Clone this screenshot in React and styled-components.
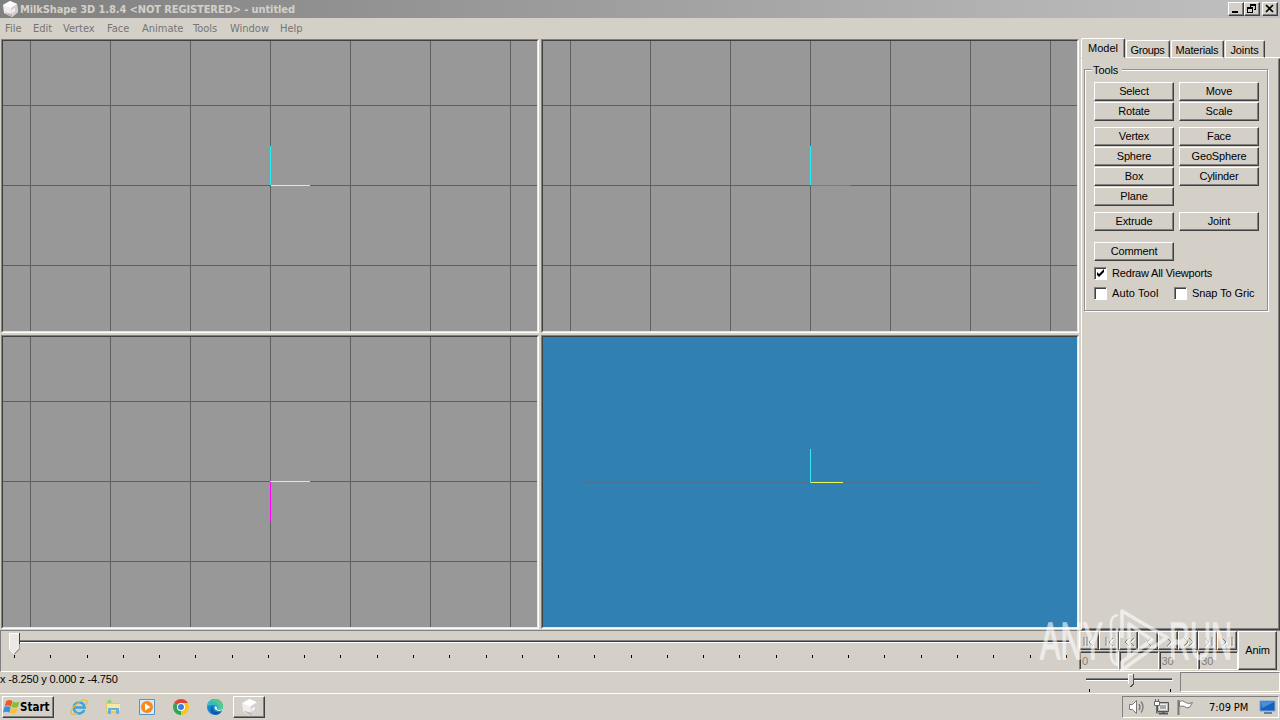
import React, { useState } from "react";
import styled, { createGlobalStyle, css } from "styled-components";

const GlobalStyle = createGlobalStyle`
  * {
    box-sizing: border-box;
  }
  body {
    margin: 0;
    overflow: hidden;
    background: #d4d0c8;
    color: #000;
    font: 11px/13px "Liberation Sans", Arial, sans-serif;
  }
`;

const MENU = [
  ["File", 28],
  ["Edit", 30],
  ["Vertex", 44],
  ["Face", 35],
  ["Animate", 51],
  ["Tools", 37],
  ["Window", 50],
  ["Help", 30],
];

const TABS = [
  ["Groups", 44, -0.35],
  ["Materials", 53, -0.2],
  ["Joints", 40, -0.1],
];

// rows of the tool box, with the gap above each row
const TOOLS = [
  { names: ["Select", "Move"], gap: 0 },
  { names: ["Rotate", "Scale"], gap: 1 },
  { names: ["Vertex", "Face"], gap: 6 },
  { names: ["Sphere", "GeoSphere"], gap: 1 },
  { names: ["Box", "Cylinder"], gap: 1 },
  { names: ["Plane"], gap: 1 },
  { names: ["Extrude", "Joint"], gap: 6 },
  { names: ["Comment"], gap: 11 },
];

const TRANSPORT = ["M4 4v9M7 4v9M13 5l-4 4 4 4", "M6 4v9M13 5l-4 4 4 4", "M9 5L5 9l4 4M14 5l-4 4 4 4", "M12 5L8 9l4 4", "M8 5l4 4-4 4", "M5 5l4 4-4 4M10 5l4 4-4 4", "M6 5l4 4-4 4M13 4v9", "M4 5l4 4-4 4M11 4v9M14 4v9"];

function App() {
  const [redraw, setRedraw] = useState(true);
  const [autoTool, setAutoTool] = useState(false);
  const [snap, setSnap] = useState(false);

  return (
    <Screen>
      <GlobalStyle />
      <TitleBar>
        <CubeIcon size={18} />
        <TitleText>MilkShape 3D 1.8.4 &lt;NOT REGISTERED&gt; - untitled</TitleText>
        <CaptionButton>
          <svg width="12" height="10">
            <path d="M2 8h6" stroke="#000" strokeWidth="2" />
          </svg>
        </CaptionButton>
        <CaptionButton>
          <svg width="12" height="10" fill="none" stroke="#000" shapeRendering="crispEdges">
            <path d="M4.5 3V.5h5v5H8M4 1.5h6M1.5 3.5h5v5h-5zM1 4.5h6" />
          </svg>
        </CaptionButton>
        <CaptionButton $gap={2}>
          <svg width="12" height="10" stroke="#000">
            <path d="M2 1l7 7M9 1L2 8" strokeWidth="1.7" />
          </svg>
        </CaptionButton>
      </TitleBar>
      <MenuBar>
        {MENU.map(([name, width]) => (
          <MenuItem key={name} $width={width}>
            {name}
          </MenuItem>
        ))}
      </MenuBar>
      <Workspace>
        <Views>
          <Viewport vertical="M267 105h1v39h-1z" horizontal="M268 144h39v1h-39z" colors={["#22f0f4", "#ffff00"]} />
          <Viewport vertical="M267 105h1v39h-1z" horizontal="M268 144h39v1h-39z" colors={["#22f0f4", "#ff20ff"]} />
          <Viewport vertical="M267 145h1v40h-1z" horizontal="M267 144h40v1h-40z" colors={["#ff00ff", "#ffff00"]} />
          <Perspective />
        </Views>
        <SidePanel>
          <TabRow>
            <ActiveTab>Model</ActiveTab>
            {TABS.map(([name, width, spacing]) => (
              <Tab key={name} $width={width} $spacing={spacing}>
                {name}
              </Tab>
            ))}
            <TabFill />
          </TabRow>
          <TabPage>
            <ToolGroup>
              <GroupTitle>Tools</GroupTitle>
              {TOOLS.map(({ names, gap }) => (
                <ToolRow key={names[0]} $gap={gap}>
                  {names.map((name) => (
                    <ToolButton key={name}>{name}</ToolButton>
                  ))}
                </ToolRow>
              ))}
              <CheckRow>
                <Check label="Redraw All Viewports" checked={redraw} onChange={setRedraw} spacing={-0.18} />
              </CheckRow>
              <CheckRow>
                <Check label="Auto Tool" checked={autoTool} onChange={setAutoTool} width={80} spacing={0.1} />
                <Check label="Snap To Gric" checked={snap} onChange={setSnap} spacing={-0.08} />
              </CheckRow>
            </ToolGroup>
          </TabPage>
        </SidePanel>
      </Workspace>
      <Timeline>
        <KeySlider />
        <Controls>
          <Transport>
            {TRANSPORT.map((d) => (
              <TransportButton key={d}>
                <svg width="17" height="16" fill="none">
                  <path d={d} stroke="#fff" transform="translate(1 1)" />
                  <path d={d} stroke="#808080" />
                </svg>
              </TransportButton>
            ))}
          </Transport>
          <Frames>
            <FrameField>0</FrameField>
            <FrameField />
            <FrameField>30</FrameField>
            <FrameField>30</FrameField>
          </Frames>
        </Controls>
        <AnimButton>Anim</AnimButton>
      </Timeline>
      <StatusBar>
        <Coords>x -8.250 y 0.000 z -4.750</Coords>
        <SpeedSlider />
        <StatusBox />
      </StatusBar>
      <Taskbar>
        <StartButton>
          <WindowsLogo />
          Start
        </StartButton>
        <QuickLaunch>
          <ExplorerIcon />
          <FolderIcon />
          <PlayerIcon />
          <ChromeIcon />
          <EdgeIcon />
        </QuickLaunch>
        <TaskButton>
          <CubeIcon size={19} />
        </TaskButton>
        <Tray>
          <TrayIcons />
          <Clock>7:09 PM</Clock>
          <DesktopIcon />
        </Tray>
      </Taskbar>
      <Watermark viewBox="0 0 196 70">
        <g fill="#fff" stroke="#fff" strokeWidth="1.4" fontFamily="Liberation Sans, Arial, sans-serif" fontSize="51">
          <text x="2" y="55" textLength="63" lengthAdjust="spacingAndGlyphs">ANY</text>
          <text x="131" y="55" textLength="63" lengthAdjust="spacingAndGlyphs">RUN</text>
        </g>
        <g fill="none" stroke="#fff" strokeWidth="3.6" strokeLinejoin="round">
          <path d="M84 34V7l45 26.500L84 66v-8l30-22L91 20v32" />
          <path d="M80 11q-7 1-7 8v32q0 7 6 10V24" strokeWidth="2.600" />
        </g>
      </Watermark>
    </Screen>
  );
}

function Viewport({ vertical, horizontal, colors }) {
  return (
    <ViewFrame>
      <svg width="534" height="290" shapeRendering="crispEdges">
        <path d="M27.5 0v290M107.5 0v290M187.5 0v290M267.5 0v290M347.5 0v290M427.5 0v290M507.5 0v290M0 64.5h534M0 144.5h534M0 224.5h534" stroke="#606060" />
        <path d={vertical} fill={colors[0]} />
        <path d={horizontal} fill={colors[1]} />
      </svg>
    </ViewFrame>
  );
}

function Perspective() {
  return (
    <ViewFrame $blue>
      <svg width="534" height="290" shapeRendering="crispEdges">
        <path d="M39 145.5h457" stroke="#4a7390" />
        <path d="M267.5 112v34" stroke="#3ee4f4" />
        <path d="M268 145.5h32" stroke="#f0f850" />
      </svg>
    </ViewFrame>
  );
}

function Check({ label, checked, onChange, width, spacing }) {
  return (
    <CheckLabel $width={width} $spacing={spacing} onClick={() => onChange(!checked)}>
      <CheckBox>
        {checked && (
          <svg width="9" height="9">
            <path d="M1 3v3l2 2 5-5V0L3 5z" fill="#000" />
          </svg>
        )}
      </CheckBox>
      {label}
    </CheckLabel>
  );
}

function KeySlider() {
  const ticks = Array.from({ length: 30 }, (_, i) => Math.round(13 + i * 36.27));
  return (
    <SliderArea>
      <svg width="1078" height="39" shapeRendering="crispEdges">
        <path d="M8 9.5h1060" stroke="#808080" />
        <path d="M8 10.5h1060" stroke="#404040" />
        <path d="M8 11.5h1061" stroke="#fff" />
        {ticks.map((x) => (
          <path key={x} d={`M${x}.5 24v3`} stroke="#000" />
        ))}
        <path d="M8 2h10v16l-5 5-5-5z" fill="#ebe9e5" />
        <path d="M8.500 18V2.500h9M8 18l5 5" stroke="#fff" fill="none" />
        <path d="M18.500 2v11" stroke="#404040" fill="none" />
        <path d="M18.500 13v5l-5 5" stroke="#a0a0a0" fill="none" />
      </svg>
    </SliderArea>
  );
}

function SpeedSlider() {
  return (
    <svg width="100" height="21" shapeRendering="crispEdges">
      <path d="M6 6.500h86" stroke="#808080" />
      <path d="M6 7.500h86" stroke="#404040" />
      <path d="M6 8.500h87" stroke="#fff" />
      <path d="M9.500 17v3M90.500 17v3" stroke="#000" />
      <path d="M48 2h5v10l-2 3-3-3z" fill="#d4d0c8" />
      <path d="M48.500 12V2.500h4" stroke="#fff" fill="none" />
      <path d="M53.500 2v10l-3 3" stroke="#505050" fill="none" />
    </svg>
  );
}

function CubeIcon({ size }) {
  return (
    <svg width={size} height={size} viewBox="0 0 18 18">
      <path d="M2 5l7-4 7 3 1 8-6 5-8-4z" fill="#f1eded" />
      <path d="M2 5l7-4 7 3-6 4z" fill="#fff" />
      <path d="M10 8l6-4 1 8-6 5z" fill="#d6cece" />
      <path d="M11 10l3-2v3l-3 2z" fill="#f6f2f2" />
      <path d="M3 12l8 5v-3z" fill="#c8b3b5" />
    </svg>
  );
}

function WindowsLogo() {
  return (
    <svg width="17" height="16" viewBox="0 0 16 15">
      <path d="M3 2q3-2 6 0L7.500 7q-3-2-6 0z" fill="#ef5a24" />
      <path d="M9.500 2.300q3 2 6 0L14 7.300q-3 2-6 0z" fill="#86bf32" />
      <path d="M1.200 7.800q3-2 6 0L6 13q-3-2-6 0z" fill="#3b8de0" />
      <path d="M7.800 8.200q3 2 6 0L12.500 13q-3 2-6 0z" fill="#fcc22d" />
    </svg>
  );
}

function ExplorerIcon() {
  return (
    <svg width="18" height="18" viewBox="0 0 18 18" fill="none">
      <path d="M14.300 12A5.500 5.500 0 1 1 14.700 9.500H5" stroke="#3ba4dc" strokeWidth="2.400" />
      <path d="M1.500 16C-1 12 9 2 15 2c3 0 2 3 1 5M1.500 16c1 1 4 0 6-1" stroke="#e6b93e" strokeWidth="1.200" />
    </svg>
  );
}

function FolderIcon() {
  return (
    <svg width="18" height="18" viewBox="0 0 18 18">
      <path d="M2 3h6l1 2h7v10H2z" fill="#e9c764" />
      <path d="M3 6h13v7H3z" fill="#f8e8a6" />
      <path d="M4 2h3v3H4z" fill="#8fc98a" />
      <path d="M4 10h11v6h-3v-4H7v4H4z" fill="#64b2dc" />
    </svg>
  );
}

function PlayerIcon() {
  return (
    <svg width="18" height="18" viewBox="0 0 18 18">
      <path d="M1.500 1.500h15v15h-15z" fill="#d9eaf7" stroke="#5793c5" />
      <circle cx="9" cy="9" r="6" fill="#f58b1f" />
      <path d="M7 5.500v7L12.500 9z" fill="#fff" />
    </svg>
  );
}

function ChromeIcon() {
  return (
    <svg width="18" height="18" viewBox="0 0 18 18">
      <path d="M9 9L2.100 5A8 8 0 0 1 15.900 5z" fill="#df4436" />
      <path d="M9 9l6.900-4A8 8 0 0 1 9 17z" fill="#f8c518" />
      <path d="M9 9v8A8 8 0 0 1 2.100 5z" fill="#35a352" />
      <path d="M9 5h7l-3 5z" fill="#f8c518" />
      <circle cx="9" cy="9" r="4" fill="#fff" />
      <circle cx="9" cy="9" r="3" fill="#397fe0" />
    </svg>
  );
}

function EdgeIcon() {
  return (
    <svg width="18" height="18" viewBox="0 0 18 18">
      <circle cx="9" cy="9" r="8" fill="#1684cf" />
      <path d="M1 9a8 8 0 0 1 16 0c0 3-3 4-6 3 2-2 0-5-3-5-3 0-5 0-7 2z" fill="#35bfbc" />
      <path d="M9 1c5 0 8 4 8 8 0 2-2 4-5 3 3-5-1-9-7-9z" fill="#57cb82" />
      <path d="M7 8c-2 4 2 7 8 6-3 4-8 3-10 0-1-2 0-5 2-6z" fill="#1557a2" />
      <path d="M9 8q-2 4 4 5l4-1v-1q-4 2-6 0 1-2-2-3z" fill="#e6eeee" />
    </svg>
  );
}

function TrayIcons() {
  return (
    <svg width="70" height="18" viewBox="0 0 70 18" fill="none" stroke="#777">
      <path d="M1.500 6.500h3l4-4v13l-4-4h-3z" fill="#fff" />
      <path d="M11 6q2 3 0 6M13 3.500q4 5.500 0 11" strokeWidth="1.300" />
      <path d="M29.500 4.500h11v9h-11z" fill="#b9b9b9" stroke="#555" />
      <path d="M31.500 6.500h7v5h-7z" fill="#a9a9a9" stroke="#eee" />
      <path d="M31 15.500h9M35.500 14v2" stroke="#555" strokeWidth="2" />
      <path d="M27.500 1v3M30.500 1v3M28.500 8v7h3" stroke="#666" />
      <path d="M26.500 3.500h5v4h-5z" fill="#fff" stroke="#666" />
      <path d="M50.500 2v15" stroke="#777" strokeWidth="2" />
      <path d="M51.500 3.500q3-2 6 1 3 2 7 0-2 3-3 5-3 1-5-1-2-1-5 0z" fill="#fff" />
    </svg>
  );
}

function DesktopIcon() {
  return (
    <svg width="17" height="15" viewBox="0 0 17 15">
      <path d="M1 1h15v10H1z" fill="#1761ba" stroke="#78a7d8" />
      <path d="M2 2h13L3 8z" fill="#4992da" />
      <path d="M5 13h8" stroke="#657e9c" strokeWidth="2" />
    </svg>
  );
}

export default App;

const raised = css`
  border: 1px solid;
  border-color: #fff #404040 #404040 #fff;
  box-shadow: inset -1px -1px #808080;
`;

const tahoma = css`
  font-family: "DejaVu Sans Condensed", "DejaVu Sans", sans-serif;
  font-stretch: condensed;
`;

const Screen = styled.div`
  position: relative;
  width: 1280px;
  height: 720px;
  display: flex;
  flex-direction: column;
  white-space: nowrap;
  overflow: hidden;
`;

const TitleBar = styled.div`
  height: 18px;
  display: flex;
  align-items: center;
  padding: 0 2px 0 1px;
  background: linear-gradient(90deg, #808080, #c0c0c0);
`;

const TitleText = styled.div`
  ${tahoma}
  flex: 1;
  padding-left: 1px;
  font-size: 11px;
  font-weight: bold;
  letter-spacing: -0.1px;
  color: #d4d0c8;
`;

const CaptionButton = styled.button`
  ${raised}
  width: 16px;
  height: 14px;
  margin: 0 0 0 ${(props) => props.$gap || 0}px;
  padding: 1px;
  background: #d4d0c8;

  svg {
    display: block;
  }
`;

const MenuBar = styled.div`
  ${tahoma}
  height: 21px;
  display: flex;
  align-items: center;
  padding: 0 0 1px 5px;
  color: #747474;
`;

const MenuItem = styled.div`
  width: ${(props) => props.$width}px;
`;

const Workspace = styled.div`
  height: 591px;
  display: flex;
`;

const Views = styled.div`
  width: 1080px;
  padding: 0 0 0 1px;
  display: grid;
  grid-template-columns: 538px 538px;
  grid-template-rows: 294px 294px;
  gap: 2px;
`;

const ViewFrame = styled.div`
  border: 1px solid;
  border-color: #808080 #fff #fff #808080;
  background: ${(props) => (props.$blue ? "#3180b4" : "#989898")};

  svg {
    display: block;
    border: 1px solid;
    border-color: #404040 #e8e5df #e8e5df #404040;
    box-sizing: content-box;
  }
`;

const SidePanel = styled.div`
  flex: 1;
  display: flex;
  flex-direction: column;
  padding-left: 1px;
`;

const TabRow = styled.div`
  height: 19px;
  display: flex;
  align-items: flex-end;
`;

const tabEdges = css`
  border: 1px solid;
  border-color: #fff #404040 transparent #fff;
  border-radius: 2px 2px 0 0;
  box-shadow: inset -1px 0 #909090;
  text-align: center;
`;

const ActiveTab = styled.div`
  ${tabEdges}
  width: 44px;
  height: 20px;
  padding-top: 3px;
`;

const Tab = styled.div`
  ${tabEdges}
  width: ${(props) => props.$width}px;
  height: 18px;
  margin-left: 1px;
  padding: 3px 1px 0 0;
  border-bottom-color: #fff;
  letter-spacing: ${(props) => props.$spacing}px;
`;

const TabFill = styled.div`
  flex: 1;
  height: 1px;
  background: #fff;
`;

const TabPage = styled.div`
  flex: 1;
  padding: 10px 0 0 2px;
  border: 1px solid;
  border-color: transparent #404040 #404040 #fff;
  box-shadow: inset -1px -1px #808080;
`;

const ToolGroup = styled.div`
  width: 184px;
  height: 242px;
  padding-left: 9px;
  border: 1px solid #909090;
  box-shadow: inset 1px 1px #fff, 1px 1px #fff;
`;

const GroupTitle = styled.div`
  width: 30px;
  height: 13px;
  margin: -6px 0 5px -2px;
  padding-left: 1px;
  background: #d4d0c8;
  letter-spacing: -0.1px;
`;

const ToolRow = styled.div`
  display: flex;
  gap: 5px;
  margin-top: ${(props) => props.$gap}px;
`;

const ToolButton = styled.button`
  ${raised}
  width: 80px;
  height: 19px;
  padding: 0;
  background: #d4d0c8;
  font: inherit;
  letter-spacing: -0.15px;
`;

const CheckRow = styled.div`
  height: 20px;
  display: flex;
  align-items: center;
  position: relative;
  top: 2px;
`;

const CheckLabel = styled.div`
  width: ${(props) => (props.$width ? props.$width + "px" : "auto")};
  display: flex;
  align-items: center;
  gap: 5px;
  letter-spacing: ${(props) => props.$spacing}px;
`;

const CheckBox = styled.span`
  width: 13px;
  height: 13px;
  padding: 1px;
  border: 1px solid;
  border-color: #808080 #fff #fff #808080;
  box-shadow: inset 1px 1px #404040;
  background: #fff;

  svg {
    display: block;
  }
`;

const Timeline = styled.div`
  height: 42px;
  display: flex;
  border-top: 1px solid #808080;
  border-left: 1px solid #808080;
  border-bottom: 1px solid #fff;
`;

const SliderArea = styled.div`
  width: 1078px;
`;

const Controls = styled.div`
  width: 159px;
`;

const Transport = styled.div`
  height: 20px;
  display: flex;
  margin-right: 1px;
`;

const TransportButton = styled.button`
  ${raised}
  flex: 1 1 0;
  min-width: 0;
  height: 19px;
  padding: 0;
  background: #d4d0c8;

  svg {
    display: block;
  }
`;

const Frames = styled.div`
  display: flex;
`;

const FrameField = styled.div`
  flex: 1 1 0;
  height: 19px;
  padding: 3px 2px;
  border: 1px solid;
  border-color: #808080 #fff #fff #808080;
  box-shadow: inset 1px 1px #404040;
  color: #808080;
`;

const AnimButton = styled.button`
  ${raised}
  width: 39px;
  height: 39px;
  padding: 0;
  background: #d4d0c8;
  font: inherit;
  letter-spacing: -0.2px;
`;

const StatusBar = styled.div`
  height: 21px;
  display: flex;
`;

const Coords = styled.div`
  width: 1080px;
  padding-top: 1px;
  letter-spacing: -0.16px;
`;

const StatusBox = styled.div`
  flex: 1;
  height: 20px;
  border: 1px solid;
  border-color: #808080 #fff #fff #808080;
`;

const Taskbar = styled.div`
  flex: 1;
  display: flex;
  align-items: flex-start;
  border-top: 1px solid #fff;
  padding: 2px 1px 0 2px;
`;

const StartButton = styled.button`
  ${raised}
  ${tahoma}
  width: 52px;
  height: 22px;
  display: flex;
  align-items: center;
  padding: 0 1px 0 0;
  background: #d4d0c8;
  font-size: 11.5px;
  font-weight: bold;
`;

const QuickLaunch = styled.div`
  width: 179px;
  display: flex;
  gap: 16px;
  padding: 2px 0 0 16px;
`;

const TaskButton = styled.button`
  ${raised}
  width: 32px;
  height: 22px;
  padding: 0;
  background: #d4d0c8;

  svg {
    display: block;
    margin: auto;
  }
`;

const Tray = styled.div`
  width: 157px;
  height: 22px;
  margin-left: auto;
  display: flex;
  align-items: center;
  padding-left: 5px;
  border: 1px solid;
  border-color: #808080 #fff #fff #808080;
`;

const Clock = styled.div`
  ${tahoma}
  width: 50px;
  margin-left: 11px;
  letter-spacing: -0.1px;
`;

// lies over the timeline and the lower viewports
const Watermark = styled.svg`
  position: absolute;
  left: 1038px;
  top: 604px;
  width: 196px;
  height: 70px;
  opacity: 0.6;
  pointer-events: none;
`;
